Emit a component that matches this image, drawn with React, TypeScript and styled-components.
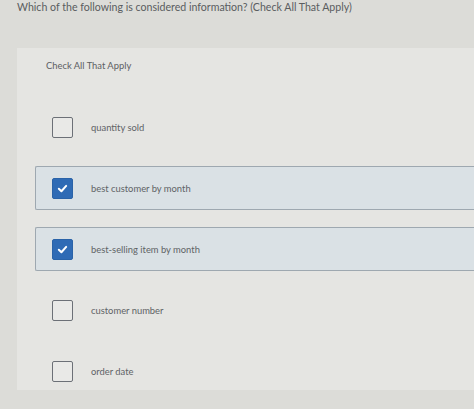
import React from "react";
import styled, { createGlobalStyle } from "styled-components";

const GlobalStyle = createGlobalStyle`
	html, body {
		margin: 0;
		padding: 0;
		overflow: hidden;
		background: #dcdcd8;
	}
	body {
		font-family: Lato, "Open Sans", sans-serif;
		color: #4e5154;
	}
`;

const options = [
	{ label: "quantity sold", checked: false },
	{ label: "best customer by month", checked: true },
	{ label: "best-selling item by month", checked: true },
	{ label: "customer number", checked: false },
	{ label: "order date", checked: false },
];

const App: React.FC = () => {
	return (
		<Page>
			<GlobalStyle />
			<Question>Which of the following is considered information? (Check All That Apply)</Question>
			<Panel>
				<Instruction>Check All That Apply</Instruction>
				<List>
					{options.map((opt) => (
						<Option key={opt.label} selected={opt.checked}>
							<Box checked={opt.checked}>
								{opt.checked && (
									<svg width="11" height="11" viewBox="0 0 12 12">
										<path d="M2 6.3 L4.8 9 L10 3.2" fill="none" stroke="#fff" strokeWidth="2.2" strokeLinecap="round" strokeLinejoin="round" />
									</svg>
								)}
							</Box>
							<Label>{opt.label}</Label>
						</Option>
					))}
				</List>
			</Panel>
		</Page>
	);
};

const Page = styled.div`
	width: 474px;
	height: 409px;
	box-sizing: border-box;
	overflow: hidden;
`;

const Question = styled.div`
	font-size: 10.6px;
	line-height: 14px;
	padding-left: 17px;
	color: #5a5d60;
	height: 48px;
`;

const Panel = styled.div`
	margin-left: 17px;
	height: 342px;
	background: #e5e5e2;
	padding-top: 12px;
	box-sizing: border-box;
`;

const Instruction = styled.div`
	font-size: 9.4px;
	line-height: 12px;
	padding-left: 29px;
	color: #5d6063;
`;

const List = styled.div`
	display: flex;
	flex-direction: column;
	gap: 17px;
	margin-top: 33px;
	margin-left: 18px;
`;

const Option = styled.div<{ selected: boolean }>`
	display: flex;
	align-items: center;
	height: 44px;
	box-sizing: border-box;
	padding-left: 16px;
	border: 1px solid ${({ selected }) => (selected ? "#9ea8b0" : "transparent")};
	border-right: none;
	border-radius: 2px 0 0 2px;
	background: ${({ selected }) => (selected ? "#dae1e5" : "transparent")};
`;

const Box = styled.div<{ checked: boolean }>`
	width: 21px;
	height: 21px;
	box-sizing: border-box;
	border-radius: 2px;
	display: flex;
	align-items: center;
	justify-content: center;
	border: ${({ checked }) => (checked ? "1px solid #2a63a8" : "1.5px solid #6c7077")};
	background: ${({ checked }) => (checked ? "#2f6bb5" : "#e9e9e7")};
	margin-right: 18px;
	flex-shrink: 0;
`;

const Label = styled.div`
	font-size: 9.4px;
	color: #606366;
`;

export default App;
